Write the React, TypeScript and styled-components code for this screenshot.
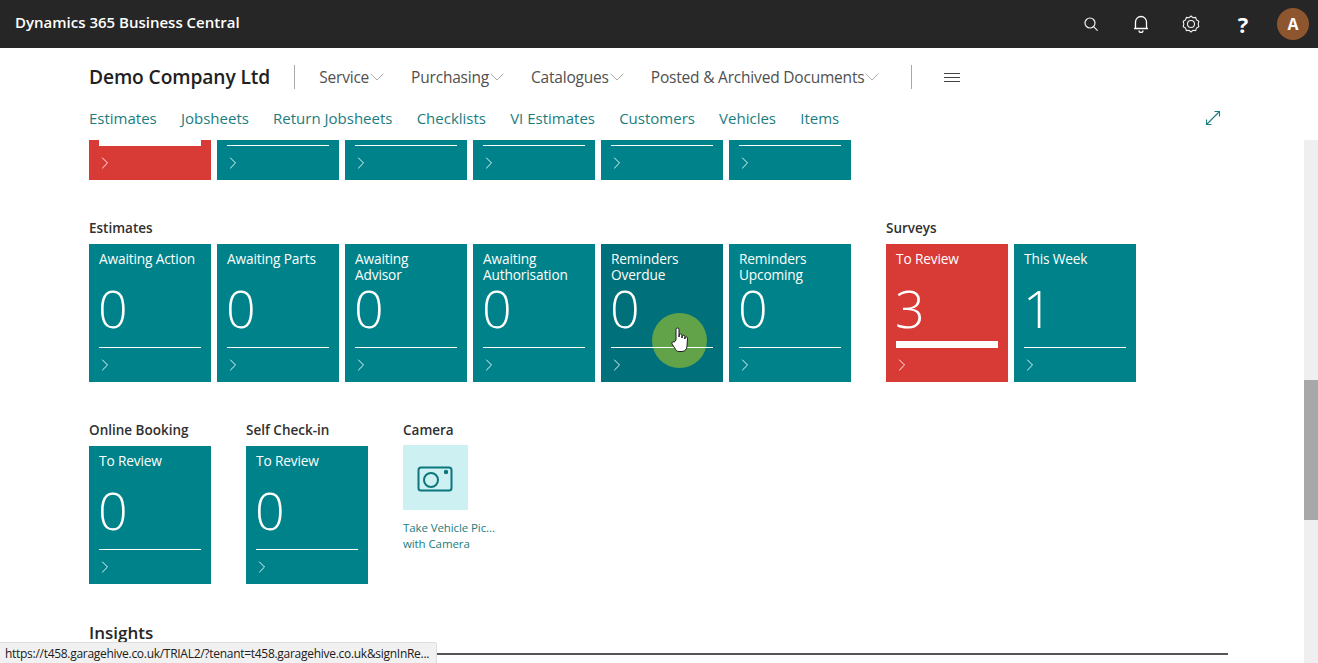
import React from 'react';
import styled, { createGlobalStyle } from 'styled-components';
import { ChevronDown, ChevronRight } from 'lucide-react';

const GlobalStyle = createGlobalStyle`
    html, body {
        margin: 0;
        height: 100%;
        overflow: hidden;
        background: #fff;
        font-family: "Open Sans", "Noto Sans", sans-serif;
    }
`;

const Page = styled.div`
    position: relative;
    width: 1318px;
    height: 663px;
    display: flex;
    flex-direction: column;
    overflow: hidden;
`;

const TopBar = styled.header`
    height: 48px;
    flex: none;
    background: #262626;
    color: #fff;
    display: flex;
    align-items: center;
    justify-content: space-between;
    padding: 0 9px 0 15px;
    box-sizing: border-box;
`;

const Brand = styled.div`
    font-size: 15px;
    font-weight: 600;
    margin-top: -4px;
`;

const TopIcons = styled.div`
    display: flex;
    align-items: center;
    gap: 22px;
`;

const IconSlot = styled.div`
    width: 28px;
    height: 32px;
    display: flex;
    align-items: center;
    justify-content: center;
`;

const HelpMark = styled.span`
    font-size: 22px;
    font-weight: 700;
    line-height: 1;
    margin-left: 4px;
`;

const Avatar = styled.div`
    width: 32px;
    height: 32px;
    border-radius: 50%;
    background: #8e562e;
    display: flex;
    align-items: center;
    justify-content: center;
    font-size: 16px;
    font-weight: 700;
`;

const CompanyHeader = styled.div`
    height: 92px;
    flex: none;
    background: #fff;
    padding: 0 97px 0 89px;
    box-sizing: border-box;
`;

const MenuRow = styled.div`
    height: 58px;
    display: flex;
    align-items: center;
`;

const Company = styled.h1`
    margin: -2px 0 0;
    font-size: 19.2px;
    font-weight: 600;
    color: #212121;
    letter-spacing: -0.1px;
`;

const Divider = styled.div<{ $flush?: boolean }>`
    width: 1px;
    height: 24px;
    background: #a8a8a8;
    margin: 0 24px 0 ${p => (p.$flush ? 5 : 24)}px;
`;

const MenuItem = styled.div`
    display: flex;
    align-items: center;
    font-size: 15.5px;
    color: #505050;
    margin-right: 22px;
    letter-spacing: -0.2px;
`;

const MenuChevron = styled(ChevronDown)`
    margin-left: -4px;
    color: #8a8a8a;
`;

const Burger = styled.div`
    width: 16px;
    height: 7px;
    margin-left: 8px;
    border-top: 1px solid #444;
    border-bottom: 1px solid #444;
    position: relative;
    &::after {
        content: '';
        position: absolute;
        left: 0;
        right: 0;
        top: 3px;
        height: 1px;
        background: #444;
    }
`;

const LinksRow = styled.div`
    height: 24px;
    display: flex;
    align-items: center;
    gap: 24.2px;
`;

const NavLink = styled.a`
    font-size: 15px;
    color: #1b7d80;
`;

const ExpandLink = styled.div`
    margin-left: auto;
    display: flex;
    color: #1b7d80;
`;

const ScrollArea = styled.main`
    position: relative;
    flex: 1;
    min-height: 0;
    overflow: hidden;
`;

const ScrollContent = styled.div`
    margin-top: -98px;
    padding: 0 90px 0 89px;
`;

const GroupRow = styled.div`
    display: flex;
    gap: 35px;
    margin-top: 40px;
`;

const Group = styled.section``;

const GroupTitle = styled.h3`
    margin: 0 0 7px;
    height: 17px;
    line-height: 17px;
    font-size: 13.5px;
    font-weight: 600;
    color: #303030;
`;

const Tiles = styled.div`
    display: flex;
    gap: 6px;
`;

const Tile = styled.div<{ $tone?: 'red' | 'hover' }>`
    position: relative;
    width: 122px;
    height: 138px;
    box-sizing: border-box;
    padding: 7px 10px 0;
    color: #fff;
    display: flex;
    flex-direction: column;
    background: ${p => (p.$tone === 'red' ? '#d83b36' : p.$tone === 'hover' ? '#00707a' : '#00828a')};
`;

const TileTitle = styled.div`
    height: 32px;
    font-size: 13.7px;
    line-height: 16px;
    letter-spacing: -0.15px;
`;

const TileValue = styled.div`
    height: 64px;
    font-size: 52px;
    font-weight: 300;
    line-height: 50px;
    margin-left: -1px;
`;

const TileBar = styled.div<{ $alert?: boolean }>`
    position: relative;
    z-index: 1;
    height: ${p => (p.$alert ? 7 : 1)}px;
    margin-top: ${p => (p.$alert ? -6 : 0)}px;
    background: #fff;
`;

const TileArrow = styled.div`
    margin: 7px 0 0 -4px;
    display: flex;
`;

const CursorHalo = styled.div`
    position: absolute;
    left: 51px;
    top: 69px;
    width: 55px;
    height: 55px;
    border-radius: 50%;
    background: #62a34a;
`;

const CursorHand = styled.svg`
    position: absolute;
    z-index: 2;
    left: 70px;
    top: 83px;
`;

const ActionTile = styled.div`
    width: 92px;
`;

const ActionIcon = styled.div`
    width: 65px;
    height: 65px;
    margin-top: -1px;
    padding-top: 4px;
    box-sizing: border-box;
    background: #cdf0f2;
    display: flex;
    align-items: center;
    justify-content: center;
`;

const ActionCaption = styled.div`
    margin-top: 10px;
    font-size: 11.5px;
    line-height: 16px;
    color: #1b7d80;
    white-space: nowrap;
    letter-spacing: -0.1px;
`;

const SectionHeading = styled.h2`
    margin: 38px 0 0;
    font-size: 17px;
    line-height: 22px;
    font-weight: 600;
    color: #262626;
`;

const SectionRule = styled.div`
    height: 2px;
    margin-top: 9px;
    background: #555;
`;

const ScrollTrack = styled.div`
    position: absolute;
    right: 0;
    top: 0;
    bottom: 0;
    width: 14px;
    background: #efefef;
`;

const ScrollThumb = styled.div`
    margin-top: 240px;
    height: 140px;
    background: #a8a8a8;
`;

const StatusBubble = styled.div`
    position: absolute;
    left: 0;
    bottom: 0;
    width: 437px;
    height: 21px;
    box-sizing: border-box;
    padding: 0 5px;
    background: #f1f1f1;
    border: 1px solid #dedede;
    border-left: 0;
    border-bottom: 0;
    border-top-right-radius: 3px;
    font-size: 12px;
    line-height: 21px;
    color: #202020;
    white-space: nowrap;
    overflow: hidden;
    letter-spacing: -0.285px;
    z-index: 3;
`;

type TileData = { title: string; value?: string; red?: boolean; hover?: boolean };

const estimates: TileData[] = [
    { title: 'Awaiting Action', value: '0' },
    { title: 'Awaiting Parts', value: '0' },
    { title: 'Awaiting Advisor', value: '0' },
    { title: 'Awaiting Authorisation', value: '0' },
    { title: 'Reminders Overdue', value: '0', hover: true },
    { title: 'Reminders Upcoming', value: '0' },
];

const surveys: TileData[] = [
    { title: 'To Review', value: '3', red: true },
    { title: 'This Week', value: '1' },
];

const scrolledTiles: TileData[] = [
    { title: '', value: '', red: true },
    { title: '', value: '' },
    { title: '', value: '' },
    { title: '', value: '' },
    { title: '', value: '' },
    { title: '', value: '' },
];

const menu = ['Service', 'Purchasing', 'Catalogues', 'Posted & Archived Documents'];
const links = ['Estimates', 'Jobsheets', 'Return Jobsheets', 'Checklists', 'VI Estimates', 'Customers', 'Vehicles', 'Items'];

const SearchIcon = () => (
    <svg width="16" height="16" viewBox="0 0 16 16" fill="none" stroke="#f2f2f2" strokeWidth="1.2">
        <circle cx="7" cy="7" r="5" />
        <path d="M10.6 10.6 14.6 14.6" />
    </svg>
);

const BellIcon = () => (
    <svg width="16" height="18" viewBox="0 0 16 18" fill="none" stroke="#fff" strokeWidth="1.3">
        <path d="M2.5 13.5V7a5.5 5.5 0 0 1 11 0v6.500M1 13.500h14" />
        <path d="M6 15.500a2 2 0 0 0 4 0" />
    </svg>
);

const GearIcon = () => (
    <svg width="18" height="18" viewBox="0 0 18 18" fill="none" stroke="#f2f2f2" strokeWidth="1.1">
        <path d="M9 1l2 1.700 2.600-.3.900 2.500 2.300 1.300-.6 2.800.6 2.800-2.300 1.300-.9 2.500-2.600-.3-2 1.700-2-1.700-2.600.3-.9-2.500-2.300-1.300.6-2.800-.6-2.800 2.300-1.300.9-2.500 2.600.3z" />
        <circle cx="9" cy="9" r="3.500" />
    </svg>
);

const ExpandIcon = () => (
    <svg width="16" height="16" viewBox="0 0 16 16" fill="none" stroke="currentColor" strokeWidth="1.1">
        <path d="M1.500 14.500 14.500 1.500M9.500 1.500h5v5M1.500 9.500v5h5" />
    </svg>
);

const CameraIcon = () => (
    <svg width="37" height="27" viewBox="0 0 37 27" fill="none" stroke="#0d767c" strokeWidth="2">
        <rect x="1.500" y="1.500" width="33" height="23" rx="2.500" />
        <circle cx="14" cy="14" r="7" />
        <circle cx="29" cy="6" r="1.200" fill="#0d767c" />
    </svg>
);

const HandCursor = () => (
    <CursorHand width="18" height="26" viewBox="0 0 18 26" fill="#fff" stroke="#1c1c1c" strokeWidth="1">
        <path d="M5 13V2.500a1.500 1.500 0 0 1 3 0V10l.2-2a1.300 1.300 0 0 1 2.600.3L11 11l.3-2a1.300 1.300 0 0 1 2.500.4V12l.4-1.300a1.200 1.200 0 0 1 2.300.5L16 19c0 3-2 5.500-5 5.500H8c-2 0-3-1-4-3L1 17c-.8-1.500 1-3 2.200-1.800z" />
    </CursorHand>
);

const MetricTile: React.FunctionComponent<{ tile: TileData }> = ({ tile }) => (
    <Tile $tone={tile.red ? 'red' : tile.hover ? 'hover' : undefined}>
        <TileTitle>{tile.title}</TileTitle>
        <TileValue>{tile.value}</TileValue>
        {tile.hover && <CursorHalo />}
        {tile.hover && <HandCursor />}
        <TileBar $alert={tile.red} />
        <TileArrow>
            <ChevronRight size={20} strokeWidth={1.1} />
        </TileArrow>
    </Tile>
);

const App: React.FunctionComponent = () => (
    <Page>
        <GlobalStyle />
        <TopBar>
            <Brand>Dynamics 365 Business Central</Brand>
            <TopIcons>
                <IconSlot><SearchIcon /></IconSlot>
                <IconSlot><BellIcon /></IconSlot>
                <IconSlot><GearIcon /></IconSlot>
                <IconSlot><HelpMark>?</HelpMark></IconSlot>
                <Avatar>A</Avatar>
            </TopIcons>
        </TopBar>
        <CompanyHeader>
            <MenuRow>
                <Company>Demo Company Ltd</Company>
                <Divider />
                {menu.map(item => (
                    <MenuItem key={item}>
                        {item}
                        <MenuChevron size={24} strokeWidth={0.7} />
                    </MenuItem>
                ))}
                <Divider $flush />
                <Burger />
            </MenuRow>
            <LinksRow>
                {links.map(link => <NavLink key={link}>{link}</NavLink>)}
                <ExpandLink><ExpandIcon /></ExpandLink>
            </LinksRow>
        </CompanyHeader>
        <ScrollArea>
            <ScrollContent>
                <Tiles>
                    {scrolledTiles.map((tile, i) => <MetricTile key={i} tile={tile} />)}
                </Tiles>
                <GroupRow>
                    <Group>
                        <GroupTitle>Estimates</GroupTitle>
                        <Tiles>
                            {estimates.map(tile => <MetricTile key={tile.title} tile={tile} />)}
                        </Tiles>
                    </Group>
                    <Group>
                        <GroupTitle>Surveys</GroupTitle>
                        <Tiles>
                            {surveys.map(tile => <MetricTile key={tile.title} tile={tile} />)}
                        </Tiles>
                    </Group>
                </GroupRow>
                <GroupRow>
                    <Group>
                        <GroupTitle>Online Booking</GroupTitle>
                        <MetricTile tile={{ title: 'To Review', value: '0' }} />
                    </Group>
                    <Group>
                        <GroupTitle>Self Check-in</GroupTitle>
                        <MetricTile tile={{ title: 'To Review', value: '0' }} />
                    </Group>
                    <Group>
                        <GroupTitle>Camera</GroupTitle>
                        <ActionTile>
                            <ActionIcon><CameraIcon /></ActionIcon>
                            <ActionCaption>Take Vehicle Pic...<br />with Camera</ActionCaption>
                        </ActionTile>
                    </Group>
                </GroupRow>
                <SectionHeading>Insights</SectionHeading>
                <SectionRule />
            </ScrollContent>
            <ScrollTrack><ScrollThumb /></ScrollTrack>
        </ScrollArea>
        <StatusBubble>https://t458.garagehive.co.uk/TRIAL2/?tenant=t458.garagehive.co.uk&amp;signInRe...</StatusBubble>
    </Page>
);

export default App;
